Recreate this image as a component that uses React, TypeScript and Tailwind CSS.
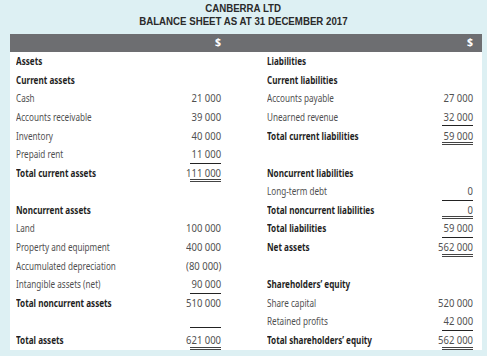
import React from "react";

type Row = {
  label?: string;
  value?: string;
  bold?: boolean;
  line?: "single" | "double" | "over";
};

// Left side of the sheet: assets
const assets: Row[] = [
  { label: "Assets", bold: true },
  { label: "Current assets", bold: true },
  { label: "Cash", value: "21 000" },
  { label: "Accounts receivable", value: "39 000" },
  { label: "Inventory", value: "40 000" },
  { label: "Prepaid rent", value: "11 000", line: "single" },
  { label: "Total current assets", value: "111 000", bold: true, line: "double" },
  {},
  { label: "Noncurrent assets", bold: true },
  { label: "Land", value: "100 000" },
  { label: "Property and equipment", value: "400 000" },
  { label: "Accumulated depreciation", value: "(80 000)" },
  { label: "Intangible assets (net)", value: "90 000", line: "single" },
  { label: "Total noncurrent assets", value: "510 000", bold: true },
  { line: "over" },
  { label: "Total assets", value: "621 000", bold: true, line: "double" },
];

// Right side: liabilities and equity
const liabilities: Row[] = [
  { label: "Liabilities", bold: true },
  { label: "Current liabilities", bold: true },
  { label: "Accounts payable", value: "27 000" },
  { label: "Unearned revenue", value: "32 000", line: "single" },
  { label: "Total current liabilities", value: "59 000", bold: true, line: "double" },
  {},
  { label: "Noncurrent liabilities", bold: true },
  { label: "Long-term debt", value: "0", line: "single" },
  { label: "Total noncurrent liabilities", value: "0", bold: true, line: "double" },
  { label: "Total liabilities", value: "59 000", bold: true, line: "single" },
  { label: "Net assets", value: "562 000", bold: true, line: "double" },
  {},
  { label: "Shareholders\u2019 equity", bold: true },
  { label: "Share capital", value: "520 000" },
  { label: "Retained profits", value: "42 000", line: "single" },
  { label: "Total shareholders\u2019 equity", value: "562 000", bold: true, line: "double" },
];

const SheetColumn: React.FC<{ rows: Row[]; labelWidth: string }> = ({ rows, labelWidth }) => (
  <div className="flex flex-col">
    {rows.map((row, i) => (
      <div key={i} className="flex h-[18.6px] items-center">
        <div className={`${labelWidth} whitespace-nowrap`}>
          {/* the print face is condensed, so squeeze the label horizontally */}
          <span
            className={`inline-block origin-left scale-x-[0.79] ${
              row.bold ? "font-bold text-[#1f1f1f]" : "text-[#505050]"
            }`}
          >
            {row.label}
          </span>
        </div>
        <div className="flex w-[55px] justify-end self-stretch">
          {row.line === "over" ? (
            <div className="mt-auto mb-[3px] w-[31px] border-b border-[#222]" />
          ) : row.value ? (
            <div
              className={`flex h-full w-[31px] items-center justify-end text-[#505050] ${
                row.line === "single"
                  ? "border-b border-[#222] pt-[1px]"
                  : row.line === "double"
                  ? "border-b-[3px] border-double border-[#444] pt-[3px]"
                  : ""
              }`}
            >
              <span className="inline-block origin-right scale-x-[0.92] whitespace-nowrap">
                {row.value}
              </span>
            </div>
          ) : null}
        </div>
      </div>
    ))}
  </div>
);

export default function App() {
  return (
    <div className="h-[356px] w-[487px] bg-[#ddf0f3] font-['Noto_Sans','Open_Sans',sans-serif]">
      {/* Title */}
      <div className="flex h-[34px] flex-col items-center pt-[2px] font-['Liberation_Sans',Arial,sans-serif] text-[11px] font-bold leading-[12.8px] text-[#2a2a2a]">
        <span className="inline-block scale-x-[0.88]">CANBERRA LTD</span>
        <span className="inline-block scale-x-[0.88]">BALANCE SHEET AS AT 31 DECEMBER 2017</span>
      </div>

      <div className="ml-[10px] w-[472px]">
        {/* Header bar */}
        <div className="flex h-[18px] items-center bg-[#6d6e71] text-[10.5px] font-bold text-white">
          <div className="w-[211px] text-right">$</div>
          <div className="flex-1 pr-[9px] text-right">$</div>
        </div>

        {/* Body */}
        <div className="flex bg-white pl-[6px] text-[10.3px] leading-none">
          <SheetColumn rows={assets} labelWidth="w-[150px]" />
          <div className="w-[46px]" />
          <SheetColumn rows={liabilities} labelWidth="w-[151px]" />
        </div>
      </div>
    </div>
  );
}
